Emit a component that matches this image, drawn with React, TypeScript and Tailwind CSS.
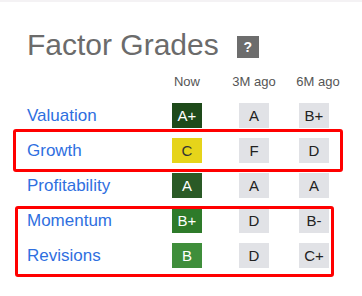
import React from 'react';

interface Row {
  name: string;
  now: string;
  nowBg: string;
  nowText: string;
  m3: string;
  m6: string;
}

const rows: Row[] = [
  { name: 'Valuation', now: 'A+', nowBg: 'bg-[#1e4a1a]', nowText: 'text-white', m3: 'A', m6: 'B+' },
  { name: 'Growth', now: 'C', nowBg: 'bg-[#e6d41a]', nowText: 'text-[#333]', m3: 'F', m6: 'D' },
  { name: 'Profitability', now: 'A', nowBg: 'bg-[#2a5a26]', nowText: 'text-white', m3: 'A', m6: 'A' },
  { name: 'Momentum', now: 'B+', nowBg: 'bg-[#2e7b2a]', nowText: 'text-white', m3: 'D', m6: 'B-' },
  { name: 'Revisions', now: 'B', nowBg: 'bg-[#3f8e3b]', nowText: 'text-white', m3: 'D', m6: 'C+' },
];

function Grade({ value, className }: { value: string; className: string }) {
  return (
    <div className={`w-[30px] h-[25px] flex items-center justify-center text-[15px] leading-none ${className}`}>
      {value}
    </div>
  );
}

export default function App() {
  return (
    <div className="relative w-[362px] h-[296px] overflow-hidden bg-white font-['Liberation_Sans',Arial,sans-serif]">
      <div className="h-[2px] bg-[#f4f2f4]" />

      <div className="flex items-start pl-[27px] mt-[28px]">
        <h2 className="text-[30px] leading-[30px] text-[#6b6b6b]">Factor Grades</h2>
        <div className="ml-[18px] mt-[6px] w-[22px] h-[22px] bg-[#6d6d6d] text-white text-[14px] font-bold flex items-center justify-center">
          ?
        </div>
      </div>

      <div className="flex mt-[14px] text-[13px] leading-[16px] text-[#555]">
        <div className="w-[157px]" />
        <div className="w-[60px] text-center">Now</div>
        <div className="w-[14px]" />
        <div className="w-[46px] text-center">3M ago</div>
        <div className="w-[18px]" />
        <div className="w-[46px] text-center">6M ago</div>
      </div>

      <div className="mt-[13px] flex flex-col gap-[10px]">
        {rows.map((r) => (
          <div key={r.name} className="flex items-center h-[25px]">
            <div className="w-[172px] pl-[27px] text-[17px] text-[#2f6fdf]">{r.name}</div>
            <Grade value={r.now} className={`${r.nowBg} ${r.nowText}`} />
            <Grade value={r.m3} className="ml-[37px] bg-[#e1e2e6] text-[#222]" />
            <Grade value={r.m6} className="ml-[30px] bg-[#e1e2e6] text-[#222]" />
          </div>
        ))}
      </div>

      {/* annotation boxes */}
      <div className="absolute left-[13px] top-[129px] w-[330px] h-[43px] border-[3px] border-[#ff0000] rounded-[3px]" />
      <div className="absolute left-[15px] top-[206px] w-[319px] h-[71px] border-[3px] border-[#ff0000] rounded-[3px]" />
    </div>
  );
}
